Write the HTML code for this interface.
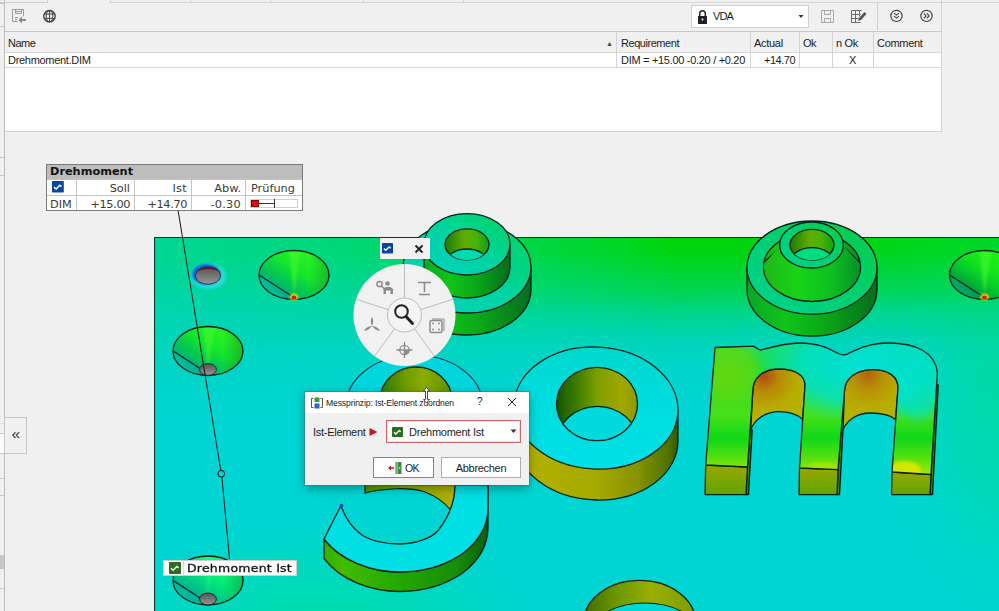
<!DOCTYPE html>
<html lang="de">
<head>
<meta charset="utf-8">
<title>Messprinzip</title>
<style>
html,body{margin:0;padding:0;}
body{width:999px;height:611px;overflow:hidden;background:#f0f0f0;position:relative;font-family:"Liberation Sans",sans-serif;font-size:12px;color:#1a1a1a;}
.abs{position:absolute;}
#scene{position:absolute;left:0;top:0;width:999px;height:611px;}
/* top panel */
.hl{position:absolute;height:1px;background:#c8c8c8;}
.vl{position:absolute;width:1px;background:#c8c8c8;}
.t{position:absolute;white-space:nowrap;line-height:14px;font-size:11px;color:#1c1c1c;letter-spacing:-.3px;}
/* label table */
#lbl{position:absolute;left:46px;top:164px;width:257px;height:47px;background:#fff;border:1px solid #7a7a7a;box-sizing:border-box;font-family:"DejaVu Sans","Liberation Sans",sans-serif;font-size:11.300px;color:#3a3a3a;}
#lbl .ttl{position:absolute;left:0;top:0;right:0;height:14px;background:#bdbdbd;font-weight:bold;font-size:11.300px;line-height:14px;padding-left:3px;color:#111;letter-spacing:0;}
#lbl .c{position:absolute;line-height:15px;white-space:nowrap;}
#lbl .r{text-align:right;}
#lbl .g{position:absolute;background:#c4c4c4;}
/* dialog */
#dlg{position:absolute;left:305px;top:392px;width:224px;height:93px;background:#f0f0f0;box-shadow:0 0 0 1px rgba(90,110,110,.55),0 3px 10px rgba(0,0,0,.35);}
#dlg .tb{position:absolute;left:0;top:0;right:0;height:21px;background:#fff;}
</style>
</head>
<body>
<!-- SCENE -->
<svg id="scene" width="999" height="611" viewBox="0 0 999 611">
<!--SCENE-START-->
<defs>
  <clipPath id="plateClip"><rect x="154" y="237" width="845" height="374"/></clipPath>
  <linearGradient id="topH" gradientUnits="userSpaceOnUse" x1="154" y1="0" x2="999" y2="0">
    <stop offset="0" stop-color="#00d860" stop-opacity="0"/>
    <stop offset=".22" stop-color="#00d850" stop-opacity=".42"/>
    <stop offset=".48" stop-color="#00d628" stop-opacity=".85"/>
    <stop offset=".62" stop-color="#00d40c" stop-opacity="1"/>
    <stop offset=".8" stop-color="#00d410" stop-opacity="1"/>
    <stop offset="1" stop-color="#00d61c" stop-opacity=".9"/>
  </linearGradient>
  <linearGradient id="topB" gradientUnits="userSpaceOnUse" x1="500" y1="237" x2="512.600" y2="415">
    <stop offset="0" stop-color="#00d78c" stop-opacity=".88"/>
    <stop offset=".17" stop-color="#00d78c" stop-opacity=".63"/>
    <stop offset=".25" stop-color="#00d78c" stop-opacity=".53"/>
    <stop offset=".42" stop-color="#00d78c" stop-opacity=".36"/>
    <stop offset=".59" stop-color="#00d78c" stop-opacity=".2"/>
    <stop offset=".81" stop-color="#00d78c" stop-opacity=".05"/>
    <stop offset="1" stop-color="#00d78c" stop-opacity="0"/>
  </linearGradient>
  <linearGradient id="fadeV" gradientUnits="userSpaceOnUse" x1="500" y1="237" x2="500" y2="420">
    <stop offset="0" stop-color="#fff"/>
    <stop offset=".07" stop-color="#fff"/>
    <stop offset=".17" stop-color="#cccccc"/>
    <stop offset=".3" stop-color="#949494"/>
    <stop offset=".4" stop-color="#525252"/>
    <stop offset=".5" stop-color="#2b2b2b"/>
    <stop offset=".59" stop-color="#121212"/>
    <stop offset=".75" stop-color="#050505"/>
    <stop offset="1" stop-color="#000"/>
  </linearGradient>
  <radialGradient id="rbL" gradientUnits="userSpaceOnUse" cx="0" cy="0" r="1" gradientTransform="translate(320 640) scale(230 120)">
    <stop offset="0" stop-color="#00e488" stop-opacity=".65"/>
    <stop offset="1" stop-color="#00e488" stop-opacity="0"/>
  </radialGradient>
  <mask id="mTop" maskUnits="userSpaceOnUse" x="154" y="237" width="845" height="374"><rect x="154" y="237" width="845" height="374" fill="url(#fadeV)"/></mask>
  <radialGradient id="rbR" gradientUnits="userSpaceOnUse" cx="0" cy="0" r="1" gradientTransform="translate(1020 390) scale(150 250)">
    <stop offset="0" stop-color="#00e070" stop-opacity=".52"/>
    <stop offset=".45" stop-color="#00e078" stop-opacity=".3"/>
    <stop offset=".75" stop-color="#00e080" stop-opacity=".1"/>
    <stop offset="1" stop-color="#00e088" stop-opacity="0"/>
  </radialGradient>

  <!-- cone -->
  <linearGradient id="coneG" gradientUnits="userSpaceOnUse" x1="-17.500" y1="11.250" x2="4.100" y2="-22.400">
    <stop offset="0" stop-color="#00b472"/>
    <stop offset=".3" stop-color="#04cc4c"/>
    <stop offset=".62" stop-color="#16e62c"/>
    <stop offset="1" stop-color="#26f024"/>
  </linearGradient>
  <linearGradient id="coneLow" gradientUnits="userSpaceOnUse" x1="-30" y1="18" x2="-14" y2="6">
    <stop offset="0" stop-color="#00c8a4"/>
    <stop offset="1" stop-color="#00a88c"/>
  </linearGradient>
  <linearGradient id="coneG4" gradientUnits="userSpaceOnUse" x1="-17.500" y1="11.250" x2="4.100" y2="-22.400">
    <stop offset="0" stop-color="#00a040"/>
    <stop offset=".3" stop-color="#04c82c"/>
    <stop offset=".62" stop-color="#12e41c"/>
    <stop offset="1" stop-color="#1cee18"/>
  </linearGradient>
  <linearGradient id="coneLow4" gradientUnits="userSpaceOnUse" x1="-30" y1="18" x2="-14" y2="6">
    <stop offset="0" stop-color="#00b070"/>
    <stop offset="1" stop-color="#009850"/>
  </linearGradient>
  <linearGradient id="coneLow3" gradientUnits="userSpaceOnUse" x1="-30" y1="18" x2="-14" y2="6">
    <stop offset="0" stop-color="#00c4a8"/>
    <stop offset="1" stop-color="#00a894"/>
  </linearGradient>
  <linearGradient id="coneG3" gradientUnits="userSpaceOnUse" x1="-17.500" y1="11.250" x2="4.100" y2="-22.400">
    <stop offset="0" stop-color="#00b48c"/>
    <stop offset=".3" stop-color="#00d084"/>
    <stop offset=".62" stop-color="#04ec78"/>
    <stop offset="1" stop-color="#10f870"/>
  </linearGradient>
  <linearGradient id="coneSh" gradientUnits="userSpaceOnUse" x1="-35" y1="0" x2="35" y2="0">
    <stop offset="0" stop-color="#006030" stop-opacity="0"/>
    <stop offset=".72" stop-color="#006030" stop-opacity="0"/>
    <stop offset="1" stop-color="#006030" stop-opacity=".38"/>
  </linearGradient>
  <linearGradient id="grayH" x1="0" y1="0" x2="0" y2="1">
    <stop offset="0" stop-color="#545454"/>
    <stop offset="1" stop-color="#969696"/>
  </linearGradient>

  <!-- boss -->
  <linearGradient id="bossSide" x1="0" y1="0" x2="1" y2="0">
    <stop offset="0" stop-color="#08a828"/>
    <stop offset=".3" stop-color="#10c418"/>
    <stop offset=".6" stop-color="#0aa818"/>
    <stop offset="1" stop-color="#056c20"/>
  </linearGradient>
  <linearGradient id="bossHole" x1="0" y1="0" x2="1" y2="0">
    <stop offset="0" stop-color="#1c7c08"/>
    <stop offset=".45" stop-color="#62ac00"/>
    <stop offset=".7" stop-color="#48b408"/>
    <stop offset="1" stop-color="#189c10"/>
  </linearGradient>
  <linearGradient id="bossTop" x1="0" y1="1" x2="1" y2="0">
    <stop offset="0" stop-color="#00d2c0"/>
    <stop offset=".5" stop-color="#00d4a0"/>
    <stop offset="1" stop-color="#00d460"/>
  </linearGradient>
  <linearGradient id="bossTop2" x1="0" y1="1" x2="1" y2="0">
    <stop offset="0" stop-color="#00d290"/>
    <stop offset=".5" stop-color="#00d070"/>
    <stop offset="1" stop-color="#08cc48"/>
  </linearGradient>
  <linearGradient id="coneSide2" x1="0" y1="0" x2="1" y2="0">
    <stop offset="0" stop-color="#20b818"/>
    <stop offset=".35" stop-color="#18d418"/>
    <stop offset=".7" stop-color="#0cc020"/>
    <stop offset="1" stop-color="#069028"/>
  </linearGradient>

  <!-- olive -->
  <linearGradient id="olO" gradientUnits="userSpaceOnUse" x1="514" y1="0" x2="678" y2="0">
    <stop offset="0" stop-color="#b4b200"/>
    <stop offset=".5" stop-color="#a6aa00"/>
    <stop offset=".75" stop-color="#869400"/>
    <stop offset=".95" stop-color="#4c7000"/>
    <stop offset="1" stop-color="#305800"/>
  </linearGradient>
  <linearGradient id="olOi" gradientUnits="userSpaceOnUse" x1="556" y1="0" x2="638" y2="0">
    <stop offset="0" stop-color="#145400"/>
    <stop offset=".25" stop-color="#3c7c00"/>
    <stop offset=".5" stop-color="#7c9e00"/>
    <stop offset=".8" stop-color="#a2a600"/>
    <stop offset="1" stop-color="#8c9800"/>
  </linearGradient>
  <linearGradient id="olS" gradientUnits="userSpaceOnUse" x1="380" y1="0" x2="452" y2="0">
    <stop offset="0" stop-color="#2c7800"/>
    <stop offset=".35" stop-color="#6c9c00"/>
    <stop offset=".6" stop-color="#8cac00"/>
    <stop offset="1" stop-color="#5c9400"/>
  </linearGradient>
  <linearGradient id="olS2" gradientUnits="userSpaceOnUse" x1="365" y1="0" x2="456" y2="0">
    <stop offset="0" stop-color="#4c9400"/>
    <stop offset=".5" stop-color="#8cac00"/>
    <stop offset="1" stop-color="#b0b000"/>
  </linearGradient>
  <linearGradient id="olB" gradientUnits="userSpaceOnUse" x1="584" y1="0" x2="696" y2="0">
    <stop offset="0" stop-color="#406c00"/>
    <stop offset=".3" stop-color="#6c9800"/>
    <stop offset=".6" stop-color="#98b000"/>
    <stop offset="1" stop-color="#7c9c00"/>
  </linearGradient>
  <linearGradient id="sWall" gradientUnits="userSpaceOnUse" x1="324" y1="0" x2="489" y2="0">
    <stop offset="0" stop-color="#34b000"/>
    <stop offset=".12" stop-color="#40bc00"/>
    <stop offset=".45" stop-color="#24a800"/>
    <stop offset=".8" stop-color="#188c08"/>
    <stop offset="1" stop-color="#0c5c10"/>
  </linearGradient>

  <linearGradient id="oTop" gradientUnits="userSpaceOnUse" x1="0" y1="347" x2="0" y2="469">
    <stop offset="0" stop-color="#00d8cc"/>
    <stop offset=".35" stop-color="#00dcdc"/>
    <stop offset="1" stop-color="#00e0e8"/>
  </linearGradient>
  <!-- m -->
  <linearGradient id="mTopG" gradientUnits="userSpaceOnUse" x1="0" y1="343" x2="0" y2="475">
    <stop offset="0" stop-color="#20dc70"/>
    <stop offset=".2" stop-color="#18dc50"/>
    <stop offset=".4" stop-color="#40e020"/>
    <stop offset=".55" stop-color="#48e018"/>
    <stop offset=".72" stop-color="#10d818"/>
    <stop offset=".86" stop-color="#50e010"/>
    <stop offset="1" stop-color="#a8e800"/>
  </linearGradient>
  <radialGradient id="mCy" gradientUnits="userSpaceOnUse" cx="0" cy="0" r="1" gradientTransform="translate(864 368) scale(106 56)">
    <stop offset="0" stop-color="#00e0d8" stop-opacity="1"/>
    <stop offset=".6" stop-color="#00e0d0" stop-opacity=".8"/>
    <stop offset="1" stop-color="#00e0c0" stop-opacity="0"/>
  </radialGradient>
  <radialGradient id="mLime" gradientUnits="userSpaceOnUse" cx="0" cy="0" r="1" gradientTransform="translate(728 372) scale(42 40)">
    <stop offset="0" stop-color="#64d810" stop-opacity="1"/>
    <stop offset=".6" stop-color="#5cd810" stop-opacity=".8"/>
    <stop offset="1" stop-color="#40d820" stop-opacity="0"/>
  </radialGradient>
  <radialGradient id="mArch" gradientUnits="userSpaceOnUse" cx="764" cy="376" r="60">
    <stop offset="0" stop-color="#b04c10"/>
    <stop offset=".25" stop-color="#b88808"/>
    <stop offset=".55" stop-color="#b8ac00"/>
    <stop offset="1" stop-color="#b4b800"/>
  </radialGradient>
  <radialGradient id="mArch2" gradientUnits="userSpaceOnUse" cx="868" cy="374" r="60">
    <stop offset="0" stop-color="#b06410"/>
    <stop offset=".25" stop-color="#b89008"/>
    <stop offset=".55" stop-color="#b8ac00"/>
    <stop offset="1" stop-color="#b4b800"/>
  </radialGradient>
  <linearGradient id="mLeg" x1="0" y1="0" x2="0" y2="1">
    <stop offset="0" stop-color="#98a800"/>
    <stop offset="1" stop-color="#60a400"/>
  </linearGradient>
  <filter id="b2" x="-20%" y="-20%" width="140%" height="140%"><feGaussianBlur stdDeviation="1.6"/></filter>
  <filter id="b3" x="-40%" y="-40%" width="180%" height="180%"><feGaussianBlur stdDeviation="5"/></filter>
  <filter id="b1" x="-20%" y="-20%" width="140%" height="140%"><feGaussianBlur stdDeviation=".8"/></filter>
  <clipPath id="oHole"><ellipse cx="597" cy="404" rx="40.500" ry="36.700"/></clipPath>
  <clipPath id="b1Hole"><ellipse cx="467" cy="244.400" rx="22" ry="15.500"/></clipPath>
  <clipPath id="b2Hole"><ellipse cx="812" cy="244.800" rx="22" ry="15.400"/></clipPath>
  <clipPath id="botHole"><ellipse cx="639.600" cy="622.400" rx="56" ry="42"/></clipPath>

  <clipPath id="coneClip"><ellipse rx="35" ry="24.500"/></clipPath>
  <g id="cone">
    <ellipse rx="35" ry="24.500" fill="url(#coneG)"/>
    <ellipse rx="35" ry="24.500" fill="url(#coneSh)"/>
    <g clip-path="url(#coneClip)"><path d="M0 21L-5 -24.500H7z" fill="#48fa30" opacity=".55" filter="url(#b2)"/></g>
    <path d="M-35 0L0 22.500V24.500A35 24.500 0 0 1 -35 0z" fill="url(#coneLow)"/>
    <path d="M-35 0L0 22.500" stroke="#06241a" stroke-width="1.200" fill="none"/>
    <ellipse rx="35" ry="24.500" fill="none" stroke="#06241a" stroke-width="1.300"/>
  </g>
  <g id="cone3">
    <ellipse rx="35" ry="24.500" fill="url(#coneG3)"/>
    <ellipse rx="35" ry="24.500" fill="url(#coneSh)"/>
    <g clip-path="url(#coneClip)"><path d="M0 21L-5 -24.500H7z" fill="#30ff80" opacity=".3" filter="url(#b2)"/></g>
    <path d="M-35 0L0 22.500V24.500A35 24.500 0 0 1 -35 0z" fill="url(#coneLow3)"/>
    <path d="M-35 0L0 22.500" stroke="#06241a" stroke-width="1.200" fill="none"/>
    <ellipse rx="35" ry="24.500" fill="none" stroke="#06241a" stroke-width="1.300"/>
  </g>
  <g id="cone4">
    <ellipse rx="35" ry="24.500" fill="url(#coneG4)"/>
    <ellipse rx="35" ry="24.500" fill="url(#coneSh)"/>
    <g clip-path="url(#coneClip)"><path d="M0 21L-5 -24.500H7z" fill="#48fa30" opacity=".55" filter="url(#b2)"/></g>
    <path d="M-35 0L0 22.500V24.500A35 24.500 0 0 1 -35 0z" fill="url(#coneLow4)"/>
    <path d="M-35 0L0 22.500" stroke="#06241a" stroke-width="1.200" fill="none"/>
    <ellipse rx="35" ry="24.500" fill="none" stroke="#06241a" stroke-width="1.300"/>
  </g>
  <g id="apexRed">
    <ellipse cx="0" cy="22" rx="4.200" ry="3.200" fill="#e8e000" filter="url(#b1)"/>
    <ellipse cx="0" cy="22.600" rx="2.400" ry="2" fill="#e01000"/>
  </g>
  <g id="apexHole">
    <ellipse cx="0" cy="18.500" rx="8.400" ry="5.900" fill="url(#grayH)" stroke="#1c2c24" stroke-width="1"/>
  </g>
</defs>

<g clip-path="url(#plateClip)">
  <!-- plate -->
  <rect x="154" y="237" width="845" height="374" fill="#00d5d4"/>
  <rect x="154" y="237" width="845" height="374" fill="url(#rbR)"/>
  <rect x="154" y="237" width="845" height="374" fill="url(#rbL)"/>
  <rect x="154" y="237" width="845" height="374" fill="url(#topB)"/>
  <rect x="154" y="237" width="845" height="374" fill="url(#topH)" mask="url(#mTop)"/>

  <!-- plate border -->
  <path d="M154.500 611V237.500H999" fill="none" stroke="#0c3c30" stroke-width="1.200"/>
  <!-- small hole -->
  <ellipse cx="208.500" cy="276" rx="17.500" ry="13" fill="#30e0f0" opacity=".75" filter="url(#b2)"/>
  <ellipse cx="206.300" cy="274.200" rx="14" ry="10.200" fill="#1060e0" filter="url(#b1)"/>
  <ellipse cx="208" cy="275.500" rx="12.600" ry="8.700" fill="url(#grayH)"/>
  <path d="M196.800 272a12.600 8.700 0 0 1 22.400 0a13 6 0 0 0 -22.400 0z" fill="#701010"/>
  <ellipse cx="208" cy="275.500" rx="12.600" ry="8.700" fill="none" stroke="#202828" stroke-width=".8"/>

  <!-- cones -->
  <use href="#cone" x="294" y="275"/><use href="#apexRed" x="294" y="275"/>
  <use href="#cone" x="208" y="351"/><use href="#apexHole" x="208" y="351"/>
  <use href="#cone3" x="208" y="580.500"/><use href="#apexHole" x="208" y="580.500"/>
  <use href="#cone4" x="984.500" y="275"/><use href="#apexRed" x="984.500" y="275"/>

  <!-- bottom hole -->
  <ellipse cx="639.600" cy="622.400" rx="56" ry="42" fill="url(#olB)"/>
  <g clip-path="url(#botHole)"><ellipse cx="644.800" cy="643" rx="60" ry="40" fill="#00d8d6" stroke="#06241a" stroke-width="1.200"/></g>
  <ellipse cx="639.600" cy="622.400" rx="56" ry="42" fill="none" stroke="#06241a" stroke-width="1.300"/>
</g>

<!-- BOSS 1 -->
<g stroke="#06241a" stroke-width="1.300" stroke-linejoin="round">
  <path d="M403 267.300V289.300A64 45.700 0 0 0 531 289.300V267.300z" fill="url(#bossSide)"/>
  <ellipse cx="467" cy="267.300" rx="64" ry="45.700" fill="url(#bossTop)"/>
  <path d="M424 244.300V267.300A43 30.700 0 0 0 510 267.300V244.300z" fill="url(#bossSide)"/>
  <ellipse cx="467" cy="244.300" rx="43" ry="30.700" fill="url(#bossTop)"/>
  <ellipse cx="467" cy="244.400" rx="22" ry="15.500" fill="url(#bossHole)"/>
  <g clip-path="url(#b1Hole)"><ellipse cx="467" cy="264.500" rx="22" ry="15.500" fill="#00dcb0"/></g>
</g>

<!-- BOSS 2 -->
<g stroke="#06241a" stroke-width="1.300" stroke-linejoin="round">
  <path d="M747 267.600V289.600A65 46.600 0 0 0 877 289.600V267.600z" fill="url(#bossSide)"/>
  <ellipse cx="812" cy="267.600" rx="65" ry="46.600" fill="url(#bossTop2)"/>
  <ellipse cx="812" cy="267" rx="48.500" ry="34.500" fill="url(#coneSide2)"/>
  <path d="M780 247L764.500 262M844 247L859.500 262" fill="none"/>
  <path d="M779.600 245L763.700 265A48.500 34.500 0 0 0 860.300 265L843.200 245z" fill="url(#coneSide2)" stroke="none"/>
  <ellipse cx="811.500" cy="245" rx="31.800" ry="23" fill="url(#bossTop2)"/>
  <ellipse cx="812" cy="244.800" rx="22" ry="15.400" fill="url(#bossHole)"/>
  <g clip-path="url(#b2Hole)"><ellipse cx="812" cy="263" rx="22" ry="15.400" fill="#00dc80"/></g>
</g>

<g clip-path="url(#plateClip)">
  <!-- S upper bowl -->
  <ellipse cx="414.500" cy="405" rx="68" ry="50" fill="#00d6dc" stroke="#083858" stroke-width="1.200"/>
  <ellipse cx="416" cy="400" rx="36" ry="33" fill="url(#olS)" stroke="#06241a" stroke-width="1.300"/>

  <!-- S lower bowl -->
  <path d="M365 485V493C385 488 410 487 425 492C438 497 447 505 452 512L456 485z" fill="url(#olS2)" stroke="#06241a" stroke-width="1.200"/>
  <path d="M324 539C340 560 370 572 400 572C425 572 447 564 462 554C478 542 488 527 488 508L488 485L488 527.500C488 546.500 478 561.500 462 573.500C447 583.500 425 591.500 400 591.500C370 591.500 340 579.500 324 558.500z" fill="url(#sWall)" stroke="#06241a" stroke-width="1.300" stroke-linejoin="round"/>
  <path d="M341 505.500L324 539C340 560 370 572 400 572C425 572 447 564 462 554C478 542 488 527 488 508L488 485L455 485C455 500 450 515 438.500 530C432 538.500 414 544 400 544C385 544 372 541 362.500 535.500C352 528 345 518 341 505.500z" fill="#00dfe3" stroke="#06241a" stroke-width="1.300" stroke-linejoin="round"/>
  <circle cx="341.500" cy="505.500" r="1.800" fill="#1838c0"/>

  <!-- o -->
  <path d="M514.050 406.100V437.100A82 61 3 0 0 677.950 440.900V409.900z" fill="url(#olO)" stroke="#06241a" stroke-width="1.300"/>
  <ellipse cx="596" cy="408" rx="82" ry="61" transform="rotate(3 596 408)" fill="url(#oTop)" stroke="#06241a" stroke-width="1.300"/>
  <ellipse cx="597" cy="404" rx="40.500" ry="36.700" fill="url(#olOi)"/>
  <g clip-path="url(#oHole)"><ellipse cx="597.500" cy="443" rx="40.500" ry="36.700" fill="#00dadc" stroke="#06241a" stroke-width="1.200"/></g>
  <ellipse cx="597" cy="404" rx="40.500" ry="36.700" fill="none" stroke="#06241a" stroke-width="1.300"/>

  <!-- m legs front faces -->
  <g stroke="#06241a" stroke-width="1.300" stroke-linejoin="round">
    <path d="M747.500 467L750.200 430H752.200L748.500 494.600H746z" fill="#4c7c00"/>
    <path d="M838 469.700L841 430H843L839.500 494.600H837z" fill="#4c7c00"/>
    <path d="M931 474.500L936.700 385H938.300L932.500 494.600H930z" fill="#4c7c00"/>
    <path d="M705.700 465L747.500 467L746 494.600H705z" fill="url(#mLeg)"/>
    <path d="M799.500 468L838 469.700L837 494.600H799z" fill="url(#mLeg)"/>
    <path d="M892 472L931 474.500L930 494.600H891.500z" fill="url(#mLeg)"/>
    <!-- arch walls -->
    <g><path d="M752.800 390.700C753 378 763 369 779 369C795 369 805 375 805 385.400L802.600 419.500C797 414 790 411.600 779 411.600C765 411.600 754 420 750.700 430z" fill="url(#mArch)"/></g>
    <path d="M844.500 390.700C845 378 856 369.700 873 369.700C888 369.700 898 376 898 388L895.500 419.500C890 415 882 413 870.600 413C857 413 847 420 843 430z" fill="url(#mArch2)"/>
  </g>
  <!-- m top face -->
  <path d="M715 347.500L752.500 346.200C756 346.500 757 350 761 350C772 347 785 343 800 343C820 343 830 349.500 838.500 353.500Q843 355.800 847.500 354C856 350 868 343 889 343C915 343 935 352 937.400 372.400L931 474.500L892 472L898 388C898 376 888 369.700 873 369.700C856 369.700 845 378 844.500 390.700L838 469.700L799.500 468L805 385.400C805 375 795 369 779 369C763 369 753 378 752.800 390.700L747.500 467L705.700 465z" fill="url(#mTopG)"/>
  <clipPath id="mClip"><path d="M715 347.500L752.500 346.200C756 346.500 757 350 761 350C772 347 785 343 800 343C820 343 830 349.500 838.500 353.500Q843 355.800 847.500 354C856 350 868 343 889 343C915 343 935 352 937.400 372.400L931 474.500L892 472L898 388C898 376 888 369.700 873 369.700C856 369.700 845 378 844.500 390.700L838 469.700L799.500 468L805 385.400C805 375 795 369 779 369C763 369 753 378 752.800 390.700L747.500 467L705.700 465z"/></clipPath>
  <g clip-path="url(#mClip)">
    <rect x="700" y="340" width="240" height="140" fill="url(#mCy)"/>
    <rect x="700" y="340" width="240" height="140" fill="url(#mLime)"/>
    <ellipse cx="918" cy="385" rx="26" ry="34" fill="#00e0cc" opacity=".75" filter="url(#b3)"/>
    <ellipse cx="905" cy="470" rx="16" ry="9" fill="#e8e800" opacity=".8" filter="url(#b2)"/>
    <ellipse cx="824" cy="467" rx="16" ry="5" fill="#b8e800" opacity=".55" filter="url(#b2)"/>
  </g>
  <path d="M715 347.500L752.500 346.200C756 346.500 757 350 761 350C772 347 785 343 800 343C820 343 830 349.500 838.500 353.500Q843 355.800 847.500 354C856 350 868 343 889 343C915 343 935 352 937.400 372.400L931 474.500L892 472L898 388C898 376 888 369.700 873 369.700C856 369.700 845 378 844.500 390.700L838 469.700L799.500 468L805 385.400C805 375 795 369 779 369C763 369 753 378 752.800 390.700L747.500 467L705.700 465z" fill="none" stroke="#06241a" stroke-width="1.300" stroke-linejoin="round"/>

</g>

<!-- leader line -->
<path d="M178 210L220.800 470.500M221.900 477L229.500 559" fill="none" stroke="#141414" stroke-width="1"/>
<circle cx="221.300" cy="473.700" r="3.300" fill="none" stroke="#141414" stroke-width="1"/>

<!--SCENE-END-->
</svg>

<!-- LEFT STRIP -->
<div class="vl" style="left:4px;top:0;height:611px;background:#bdbdbd;"></div>
<div class="hl" style="left:0;top:3px;width:4px;"></div>
<div class="hl" style="left:0;top:26px;width:4px;"></div>
<div class="hl" style="left:0;top:157px;width:4px;"></div>
<div class="hl" style="left:0;top:175px;width:4px;"></div>
<div class="abs" style="left:0;top:433px;width:4px;height:21px;background:#fff;border-top:1px solid #c8c8c8;border-bottom:1px solid #c8c8c8;box-sizing:border-box;"></div>
<div class="hl" style="left:0;top:423px;width:4px;background:#dcdcdc;"></div>
<div class="hl" style="left:0;top:478px;width:4px;"></div>
<div class="hl" style="left:0;top:495px;width:4px;"></div>
<div class="abs" style="left:0;top:555px;width:4px;height:14px;background:#c6c6c6;"></div>
<div class="hl" style="left:0;top:588px;width:4px;"></div>
<div class="abs" style="left:4px;top:417px;width:23px;height:37px;border:1px solid #c6c6c6;box-sizing:border-box;background:#f0f0f0;"></div>
<div class="abs" style="left:11.500px;top:427px;width:14px;height:14px;font-size:15.500px;line-height:14px;color:#333;">«</div>

<!-- TOP TABS -->
<div class="hl" style="left:0;top:2px;width:48px;background:#cfcfcf;"></div>
<div class="vl" style="left:47px;top:0;height:3px;background:#cfcfcf;"></div>
<div class="hl" style="left:110px;top:2px;width:889px;background:#d6d6d6;"></div>
<div class="vl" style="left:110px;top:0;height:3px;background:#cfcfcf;"></div>
<div class="vl" style="left:190px;top:0;height:3px;background:#cfcfcf;"></div>
<div class="vl" style="left:270px;top:0;height:3px;background:#cfcfcf;"></div>
<div class="vl" style="left:363px;top:0;height:3px;background:#cfcfcf;"></div>
<div class="vl" style="left:463px;top:0;height:3px;background:#cfcfcf;"></div>

<!-- TABLE PANEL -->
<div class="abs" style="left:5px;top:52px;width:936px;height:80px;background:#fff;"></div>
<div class="hl" style="left:5px;top:31px;width:937px;"></div>
<div class="hl" style="left:5px;top:52px;width:937px;background:#d8d8d8;"></div>
<div class="hl" style="left:5px;top:67px;width:937px;background:#dcdcdc;"></div>
<div class="hl" style="left:5px;top:131px;width:937px;background:#d0d0d0;"></div>
<div class="vl" style="left:941px;top:0;height:132px;background:#d4d4d4;"></div>
<div class="vl" style="left:616px;top:32px;height:36px;background:#d4d4d4;"></div>
<div class="vl" style="left:750px;top:32px;height:36px;background:#d4d4d4;"></div>
<div class="vl" style="left:799px;top:32px;height:36px;background:#d4d4d4;"></div>
<div class="vl" style="left:832px;top:32px;height:36px;background:#d4d4d4;"></div>
<div class="vl" style="left:873px;top:32px;height:36px;background:#d4d4d4;"></div>
<div class="t" style="left:8px;top:36px;letter-spacing:-.47px;">Name</div>
<div class="t" style="left:606px;top:37px;font-size:7px;color:#444;">▲</div>
<div class="t" style="left:621px;top:36px;letter-spacing:-.45px;">Requirement</div>
<div class="t" style="left:754px;top:36px;">Actual</div>
<div class="t" style="left:803px;top:36px;letter-spacing:-.5px;">Ok</div>
<div class="t" style="left:836px;top:36px;">n Ok</div>
<div class="t" style="left:877px;top:36px;">Comment</div>
<div class="t" style="left:8px;top:53px;">Drehmoment.DIM</div>
<div class="t" style="left:621px;top:53px;">DIM = +15.00 -0.20 / +0.20</div>
<div class="t" style="left:760px;top:53px;width:35px;text-align:right;letter-spacing:-.5px;">+14.70</div>
<div class="t" style="left:849px;top:53px;">X</div>

<!-- toolbar -->
<svg class="abs" style="left:0;top:0;" width="999" height="31" viewBox="0 0 999 31">
  <!-- save-arrow icon -->
  <g fill="none" stroke="#9a9a9a" stroke-width="1">
    <path d="M12.500 9.500h11v7 M12.500 9.500v12h5"/>
    <path d="M15.500 9.500v4h6v-4" />
    <path d="M16 11.500h5 M15 17.500h3 M15 19.500h2"/>
  </g>
  <path d="M26 19h-4v-2.500l-3.500 3.500 3.500 3.500v-2.500h4z" fill="#8a8a8a"/>
  <!-- globe -->
  <g fill="none" stroke="#3a3a3a" stroke-width=".9">
    <circle cx="49.500" cy="16.200" r="5.700" stroke-width="1.300"/>
    <ellipse cx="49.500" cy="16.200" rx="3.300" ry="5.700"/>
    <path d="M44.500 14h10 M44.500 18.400h10 M49.500 10.400v11.600"/>
  </g>
  <!-- combo -->
  <rect x="691.500" y="5.500" width="117" height="22" fill="#fff" stroke="#d0d0d0"/>
  <path d="M698 16h9v8h-9z" fill="#222"/>
  <path d="M699.700 16v-2.400a2.800 2.800 0 0 1 5.600 0V16" fill="none" stroke="#222" stroke-width="1.500"/>
  <circle cx="702.500" cy="19.500" r="1" fill="#fff"/>
  <path d="M798.500 15h5l-2.500 3z" fill="#333"/>
  <!-- save icon -->
  <g fill="none" stroke="#a8a8a8" stroke-width="1">
    <path d="M821.500 10.500h12v12h-12z"/>
    <path d="M824.500 10.500v4h6v-4 M824.500 22.500v-4h6v4"/>
  </g>
  <!-- table edit icon -->
  <g fill="none" stroke="#6a6a6a" stroke-width="1">
    <path d="M851.500 10.500h10 M851.500 10.500v12h9 M851.500 14.500h9 M851.500 18.500h7 M855.500 10.500v12 M859.500 10.500v6"/>
  </g>
  <path d="M858 21l1-3 5.500-6 2 2-5.500 6z" fill="#555"/>
  <path d="M877.500 3v27" stroke="#d0d0d0"/>
  <!-- circle chevrons -->
  <g fill="none" stroke="#444" stroke-width="1.200">
    <circle cx="896.500" cy="15.900" r="5.600"/>
    <path d="M894 13.100l2.500 2 2.500-2 M894 16.100l2.500 2 2.500-2"/>
    <circle cx="926.500" cy="15.900" r="5.600"/>
    <path d="M924 13.400l2 2.500-2 2.500 M927 13.400l2 2.500-2 2.500"/>
  </g>
</svg>
<div class="t" style="left:713px;top:9px;font-size:11px;letter-spacing:-.9px;">VDA</div>

<!-- LABEL TABLE -->
<div id="lbl">
  <div class="ttl">Drehmoment</div>
  <div class="g" style="left:0;top:14px;right:0;height:1px;"></div>
  <div class="g" style="left:0;top:30px;right:0;height:1px;"></div>
  <div class="g" style="left:29px;top:15px;width:1px;bottom:0;"></div>
  <div class="g" style="left:87px;top:15px;width:1px;bottom:0;"></div>
  <div class="g" style="left:144px;top:15px;width:1px;bottom:0;"></div>
  <div class="g" style="left:198px;top:15px;width:1px;bottom:0;"></div>
  <svg class="abs" style="left:5px;top:16.300px;" width="12" height="12" viewBox="0 0 12 12"><rect width="11.800" height="11.600" rx=".8" fill="#0a45a4"/><path d="M2 6.100L4.100 8L7.800 4.200L9.500 5.600" stroke="#fff" stroke-width="1.500" fill="none"/></svg>
  <div class="c r" style="left:30px;width:53px;top:15.500px;">Soll</div>
  <div class="c r" style="left:88px;width:52px;top:15.500px;letter-spacing:.3px;">Ist</div>
  <div class="c r" style="left:145px;width:49px;top:15.500px;">Abw.</div>
  <div class="c" style="left:204px;top:15.500px;">Prüfung</div>
  <div class="c" style="left:3px;top:31.500px;">DIM</div>
  <div class="c r" style="left:30px;width:53px;top:31.500px;letter-spacing:-.38px;">+15.00</div>
  <div class="c r" style="left:88px;width:52px;top:31.500px;letter-spacing:-.38px;">+14.70</div>
  <div class="c r" style="left:145px;width:49px;top:31.500px;letter-spacing:.25px;">-0.30</div>
  <div class="abs" style="left:203px;top:34px;width:48px;height:9px;border:1px solid #d0d0d0;box-sizing:border-box;background:#fff;"></div>
  <div class="abs" style="left:204px;top:35px;width:8px;height:7px;background:#f00000;border:1px solid #700;box-sizing:border-box;"></div>
  <div class="abs" style="left:212px;top:38px;width:15px;height:1px;background:#333;"></div>
  <div class="abs" style="left:227px;top:34px;width:1px;height:9px;background:#333;"></div>
</div>

<!-- MINI TOOLBAR -->
<div class="abs" style="left:380px;top:238px;width:50px;height:21px;background:#f2f2f2;"></div>
<svg class="abs" style="left:382px;top:243px;" width="12" height="11" viewBox="0 0 12 11"><rect width="11" height="10.500" rx=".7" fill="#0a45a4"/><path d="M1.900 5.600L3.800 7.300L7.200 3.900L8.800 5.100" stroke="#fff" stroke-width="1.400" fill="none"/></svg>
<svg class="abs" style="left:414px;top:244px;" width="10" height="10" viewBox="0 0 10 10"><path d="M1.500 1.500l7 7M8.500 1.500l-7 7" stroke="#222" stroke-width="1.900" fill="none"/></svg>

<!-- RADIAL MENU -->
<svg class="abs" style="left:350px;top:261px;" width="110" height="110" viewBox="350 261 110 110">
  <circle cx="404.500" cy="315" r="51" fill="#f1f1f1"/>
  <g stroke="#bcbcbc" stroke-width="1" fill="none">
    <path d="M404.500 298V264"/>
    <path d="M420.700 309.700L453 299.200"/>
    <path d="M414.500 328.800L434.500 356.300"/>
    <path d="M394.500 328.800L374.500 356.300"/>
    <path d="M388.300 309.700L356 299.200"/>
    <circle cx="404.500" cy="315" r="17" fill="#f4f4f4"/>
  </g>
  <!-- magnifier -->
  <circle cx="401.500" cy="311.500" r="6.300" fill="none" stroke="#222" stroke-width="2"/>
  <path d="M406 316.500l6.500 7" stroke="#222" stroke-width="3" stroke-linecap="round"/>
  <!-- T icon -->
  <g stroke="#8c8c8c" fill="none" stroke-width="1.600">
    <path d="M418 282.500h13M424.500 283v9M419 294.500h11"/>
  </g>
  <!-- person/key -->
  <g fill="#8c8c8c">
    <circle cx="387.500" cy="283.500" r="2.300"/>
    <path d="M383.500 294v-5.500l2-1.500h5l2.500 2v5h-2.500v-3.500h-4.500V294z"/>
  </g>
  <circle cx="379.500" cy="284" r="2.600" fill="none" stroke="#8c8c8c" stroke-width="1.500"/>
  <path d="M381.500 286l3 3" stroke="#8c8c8c" stroke-width="1.500"/>
  <!-- propeller -->
  <g fill="#8c8c8c">
    <path d="M372 326c-1.600-3.500-1.600-6.500 0-9 1.600 2.500 1.600 5.500 0 9z"/>
    <path d="M372 326c-2.200 3-4.800 4.600-8 4.800 1.400-2.800 4-4.500 8-4.800z"/>
    <path d="M372 326c2.200 3 4.800 4.600 8 4.800-1.400-2.800-4-4.500-8-4.800z"/>
  </g>
  <!-- square corner icon -->
  <g fill="none" stroke="#8c8c8c" stroke-width="1.500">
    <rect x="430" y="320.500" width="12" height="12" rx="1.500"/>
    <path d="M432 319h12v12" stroke-width="1"/>
  </g>
  <g fill="#8c8c8c"><circle cx="433" cy="323.500" r=".9"/><circle cx="439" cy="323.500" r=".9"/><circle cx="433" cy="329.500" r=".9"/><circle cx="439" cy="329.500" r=".9"/></g>
  <!-- crosshair -->
  <g fill="none" stroke="#8c8c8c" stroke-width="1.300">
    <circle cx="404.500" cy="350" r="4.700"/>
    <path d="M404.500 342v16M396.500 350h16"/>
  </g>
  <path d="M404.500 350h4.700a4.700 4.700 0 0 1-4.700 4.700z" fill="#8c8c8c"/>
</svg>

<!-- DIALOG -->
<div id="dlg">
  <div class="tb"></div>
  <svg class="abs" style="left:6px;top:5px;" width="12" height="12" viewBox="0 0 12 12">
    <path d="M2.500 1.500h-2v9h2M9.500 1.500h2v9h-2" fill="none" stroke="#555" stroke-width="1"/>
    <rect x="3.500" y="0.500" width="5" height="4.500" fill="#3a9a3a"/>
    <rect x="3.500" y="6.500" width="5" height="5" fill="#2f5fc0"/>
  </svg>
  <div class="t" style="left:21px;top:4.800px;font-size:8.600px;letter-spacing:-.13px;line-height:13px;color:#222;">Messprinzip: Ist-Element zuordnen</div>
  <div class="t" style="left:172px;top:3px;font-size:10px;line-height:14px;">?</div>
  <svg class="abs" style="left:202px;top:5px;" width="10" height="10" viewBox="0 0 10 10"><path d="M1 1l8 8M9 1l-8 8" stroke="#222" stroke-width="1" fill="none"/></svg>
  <div class="t" style="left:8px;top:33px;font-size:11px;letter-spacing:-.28px;">Ist-Element</div>
  <svg class="abs" style="left:64px;top:35px;" width="9" height="10" viewBox="0 0 9 10"><path d="M0.500 1l8 4-8 4z" fill="#c0171f"/></svg>
  <div class="abs" style="left:81px;top:28px;width:135px;height:23px;box-sizing:border-box;border:1px solid #c9686a;background:#fff;box-shadow:inset 0 0 0 1px #f3dede;"></div>
  <svg class="abs" style="left:87px;top:35px;" width="11" height="10" viewBox="0 0 11 10"><rect width="11" height="10" rx=".7" fill="#2c6e1f"/><path d="M1.900 5.300L3.800 7L7.200 3.600L8.800 4.800" stroke="#fff" stroke-width="1.300" fill="none"/></svg>
  <div class="t" style="left:104px;top:33px;font-size:11px;letter-spacing:-.24px;">Drehmoment Ist</div>
  <svg class="abs" style="left:205px;top:37px;" width="7" height="5" viewBox="0 0 7 5"><path d="M0.500 0.500h6l-3 3.500z" fill="#333"/></svg>
  <div class="abs" style="left:68px;top:65px;width:61px;height:21px;box-sizing:border-box;border:1px solid #c9686a;background:#fff;"></div>
  <svg class="abs" style="left:83px;top:69px;" width="16" height="14" viewBox="0 0 16 14">
    <path d="M0 7l3-2.500v1.700h3v1.600H3v1.700z" fill="#c0171f"/>
    <rect x="7.500" y="1" width="6" height="12" fill="#3c8a3c"/>
    <rect x="8.500" y="1" width="1.500" height="12" fill="#8fc48f"/>
    <circle cx="11.500" cy="7" r=".8" fill="#fff"/>
  </svg>
  <div class="t" style="left:100px;top:69px;font-size:10.500px;letter-spacing:-.7px;">OK</div>
  <div class="abs" style="left:136px;top:65px;width:80px;height:21px;box-sizing:border-box;border:1px solid #adadad;background:#fff;"></div>
  <div class="t" style="left:136px;top:69px;width:80px;text-align:center;font-size:11px;letter-spacing:-.3px;">Abbrechen</div>
</div>
<!-- cursor -->
<svg class="abs" style="left:420px;top:385px;" width="12" height="22" viewBox="0 0 12 22">
  <path d="M6.500 2.500L3.500 6H5.500V14.500H3.500L6.500 18L9.500 14.500H7.500V6H9.500z" fill="#fff" stroke="#3a3a4a" stroke-width=".9" stroke-linejoin="round"/>
</svg>

<!-- BOTTOM LABEL -->
<div class="abs" style="left:163px;top:560px;width:134px;height:16px;box-sizing:border-box;background:#fff;border:1px solid #cfcfcf;"></div>
<div class="vl" style="left:183px;top:561px;height:14px;background:#dcdcdc;"></div>
<svg class="abs" style="left:169px;top:562px;" width="12" height="12" viewBox="0 0 12 12"><rect width="12" height="12" rx=".8" fill="#2c6e1f"/><path d="M2 6.300L4.100 8.200L7.800 4.400L9.500 5.800" stroke="#fff" stroke-width="1.500" fill="none"/></svg>
<div class="abs bl" style="left:187px;top:560px;font-family:'DejaVu Sans','Liberation Sans',sans-serif;font-size:11px;line-height:17px;color:#111;white-space:nowrap;letter-spacing:.2px;-webkit-text-stroke:.3px #111;transform:scaleX(1.137);transform-origin:0 0;">Drehmoment Ist</div>
</body>
</html>
